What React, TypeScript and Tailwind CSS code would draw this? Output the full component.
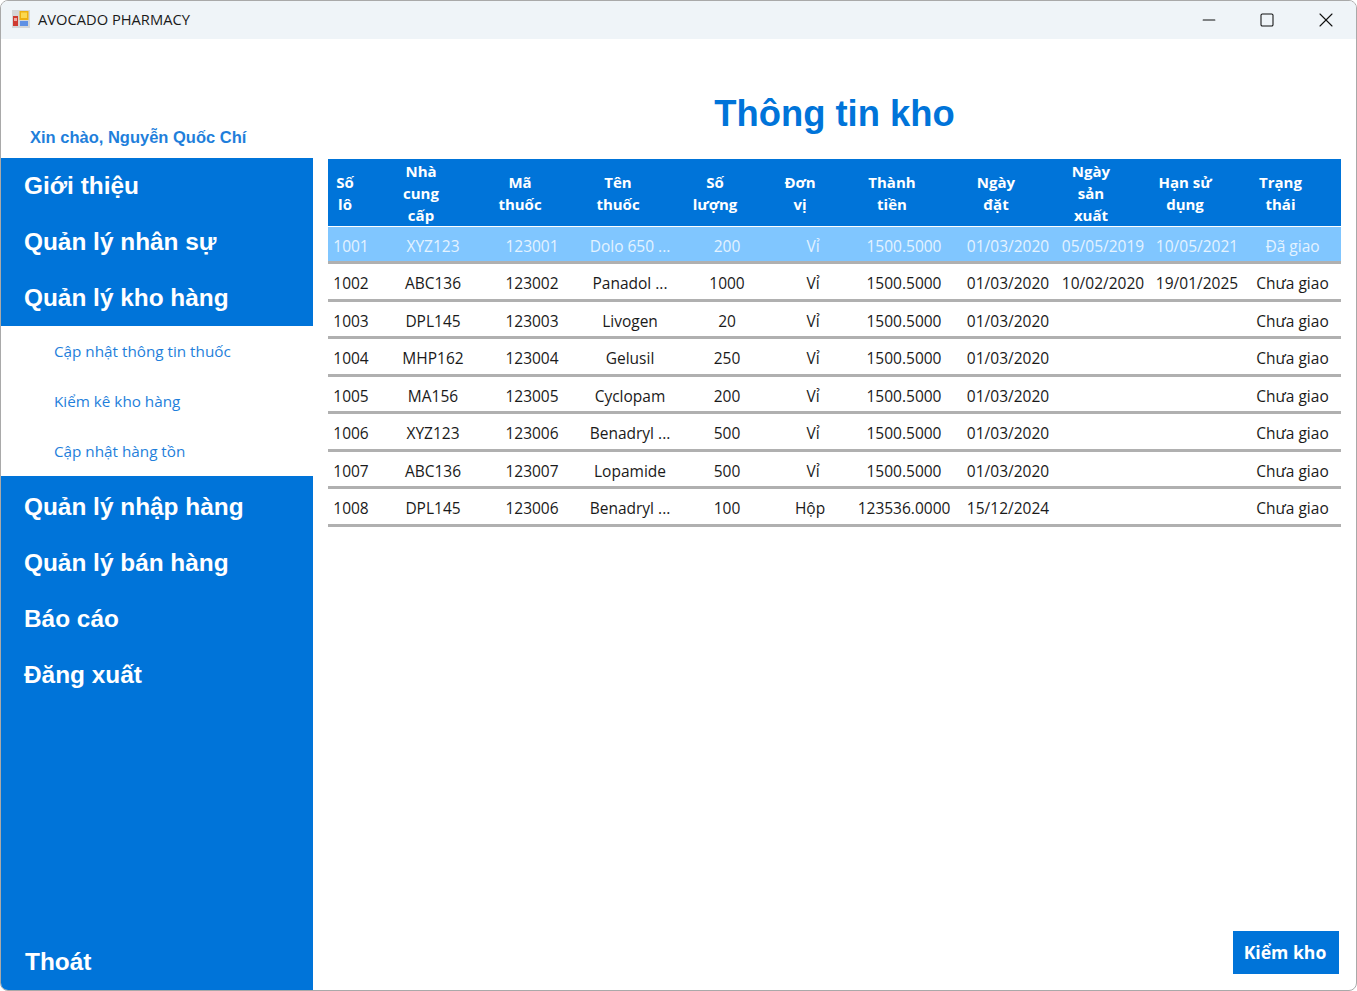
import React from 'react';
import { Minus, Square, X } from 'lucide-react';

const COLUMNS = [
  { label: ['Số', 'lô'], width: 46, shift: 12 },
  { label: ['Nhà', 'cung', 'cấp'], width: 118, shift: 24 },
  { label: ['Mã', 'thuốc'], width: 80, shift: 24 },
  { label: ['Tên', 'thuốc'], width: 116, shift: 24 },
  { label: ['Số', 'lượng'], width: 78, shift: 24 },
  { label: ['Đơn', 'vị'], width: 94, shift: 26 },
  { label: ['Thành', 'tiền'], width: 88, shift: 24 },
  { label: ['Ngày', 'đặt'], width: 120, shift: 24 },
  { label: ['Ngày', 'sản', 'xuất'], width: 70, shift: 24 },
  { label: ['Hạn sử', 'dụng'], width: 118, shift: 24 },
  { label: ['Trạng', 'thái'], width: 73, shift: 24 },
];

const ROWS = [
  ['1001', 'XYZ123', '123001', 'Dolo 650 ...', '200', 'Vỉ', '1500.5000', '01/03/2020', '05/05/2019', '10/05/2021', 'Đã giao'],
  ['1002', 'ABC136', '123002', 'Panadol ...', '1000', 'Vỉ', '1500.5000', '01/03/2020', '10/02/2020', '19/01/2025', 'Chưa giao'],
  ['1003', 'DPL145', '123003', 'Livogen', '20', 'Vỉ', '1500.5000', '01/03/2020', '', '', 'Chưa giao'],
  ['1004', 'MHP162', '123004', 'Gelusil', '250', 'Vỉ', '1500.5000', '01/03/2020', '', '', 'Chưa giao'],
  ['1005', 'MA156', '123005', 'Cyclopam', '200', 'Vỉ', '1500.5000', '01/03/2020', '', '', 'Chưa giao'],
  ['1006', 'XYZ123', '123006', 'Benadryl ...', '500', 'Vỉ', '1500.5000', '01/03/2020', '', '', 'Chưa giao'],
  ['1007', 'ABC136', '123007', 'Lopamide', '500', 'Vỉ', '1500.5000', '01/03/2020', '', '', 'Chưa giao'],
  ['1008', 'DPL145', '123006', 'Benadryl ...', '100', 'Hộp', '123536.0000', '15/12/2024', '', '', 'Chưa giao'],
];

const MENU_TOP = ['Giới thiệu', 'Quản lý nhân sự', 'Quản lý kho hàng'];
const MENU_SUB = ['Cập nhật thông tin thuốc', 'Kiểm kê kho hàng', 'Cập nhật hàng tồn'];
const MENU_BOTTOM = ['Quản lý nhập hàng', 'Quản lý bán hàng', 'Báo cáo', 'Đăng xuất'];

const gridTemplate = COLUMNS.map((c) => `${c.width}px`).join(' ');

const MenuItem: React.FC<{ label: string }> = ({ label }) => (
  <div className="flex h-14 items-center pl-[23px] pt-[1px] text-[24.4px] font-bold text-white">{label}</div>
);

const App: React.FC = () => {
  return (
    <div className="flex h-[991px] w-[1357px] flex-col overflow-hidden rounded-lg border border-[#a9a9a9] bg-white font-['Open_Sans',sans-serif]">
      <div className="flex h-[38px] shrink-0 items-center bg-[#eff4f8]">
        <svg className="mb-[3px] ml-[11px] h-[18px] w-[18px]" viewBox="0 0 18 18">
          <rect width="18" height="18" fill="#d4d6d8" />
          <rect x="1" y="6" width="5" height="10" fill="#cf3a30" />
          <rect x="2" y="8" width="3" height="3" fill="#f0a8a0" />
          <rect x="7.5" y="1" width="9" height="9" fill="#eeb010" />
          <rect x="9" y="2.5" width="6" height="5.5" fill="#fbd850" />
          <rect x="8" y="11" width="8" height="5" fill="#5f90e4" />
        </svg>
        <span className="mb-[2px] ml-[8px] text-[14.7px] text-[#1a1a1a]">AVOCADO PHARMACY</span>
        <div className="ml-auto flex items-center text-[#111111]">
          <div className="flex w-[58px] justify-center">
            <Minus size={20} strokeWidth={1.3} />
          </div>
          <div className="flex w-[58px] justify-center">
            <Square size={16} strokeWidth={1.6} />
          </div>
          <div className="flex w-[60px] justify-center">
            <X size={24} strokeWidth={1.1} />
          </div>
        </div>
      </div>

      <div className="flex min-h-0 flex-1">
        <div className="flex w-[312px] shrink-0 flex-col">
          <div className="flex h-[119px] shrink-0 items-end pb-[8px] pl-[29px] font-['Liberation_Sans',sans-serif] text-[16.5px] font-bold text-[#1f7fdb]">
            Xin chào, Nguyễn Quốc Chí
          </div>
          <div className="flex flex-1 flex-col bg-[#0074d9] font-['Liberation_Sans',sans-serif]">
            <div className="h-[168px] shrink-0">
              {MENU_TOP.map((item) => (
                <MenuItem key={item} label={item} />
              ))}
            </div>
            <div className="h-[150px] shrink-0 bg-white font-['Open_Sans',sans-serif]">
              {MENU_SUB.map((item) => (
                <div key={item} className="flex h-[50px] items-center pl-[53px] text-[15.25px] text-[#1f7fdb]">
                  {item}
                </div>
              ))}
            </div>
            <div className="pt-[3px]">
              {MENU_BOTTOM.map((item) => (
                <MenuItem key={item} label={item} />
              ))}
            </div>
            <div className="mt-auto flex h-14 items-center pl-[24px] pt-[1px] text-[24.4px] font-bold text-white">
              Thoát
            </div>
          </div>
        </div>

        <div className="flex min-w-0 flex-1 flex-col pl-[15px] pr-[15px]">
          <div className="flex h-[120px] shrink-0 items-start justify-center pt-[50px] font-['Liberation_Sans',sans-serif] text-[36.4px] font-bold leading-[50px] text-[#0074d9]">
            Thông tin kho
          </div>

          <div className="w-[1013px]">
            <div
              className="grid h-[67px] bg-[#0074d9] pt-[1px] text-[15px] font-bold leading-[22px] text-white"
              style={{ gridTemplateColumns: gridTemplate }}
            >
              {COLUMNS.map((col) => (
                <div
                  key={col.label.join(' ')}
                  className="flex flex-col items-center justify-center"
                  style={{ paddingRight: col.shift }}
                >
                  {col.label.map((line) => (
                    <span key={line} className="whitespace-nowrap">
                      {line}
                    </span>
                  ))}
                </div>
              ))}
            </div>

            <div className="pt-[0.5px]">
              {ROWS.map((row, rowIndex) => (
                <div
                  key={row[0]}
                  className={
                    rowIndex === 0
                      ? 'grid h-[37.5px] border-b-[3px] border-[#b0b0b0] bg-[#80c6ff] pt-[5px] text-[15.5px] text-[#e4f3ff]'
                      : 'grid h-[37.5px] border-b-[3px] border-[#b0b0b0] bg-white pt-[5px] text-[15.5px] text-[#1a1a1a]'
                  }
                  style={{ gridTemplateColumns: gridTemplate }}
                >
                  {row.map((cell, cellIndex) => (
                    <div
                      key={cellIndex}
                      className="flex items-center justify-center whitespace-nowrap"
                      style={{ paddingRight: cell === 'Hộp' ? 6 : 0 }}
                    >
                      {cell}
                    </div>
                  ))}
                </div>
              ))}
            </div>
          </div>

          <div className="mb-[16px] mt-auto flex justify-end pr-[2px]">
            <button className="h-[43px] w-[106px] bg-[#0074d9] pr-[2px] text-[17.6px] font-bold text-white">Kiểm kho</button>
          </div>
        </div>
      </div>
    </div>
  );
};

export default App;
